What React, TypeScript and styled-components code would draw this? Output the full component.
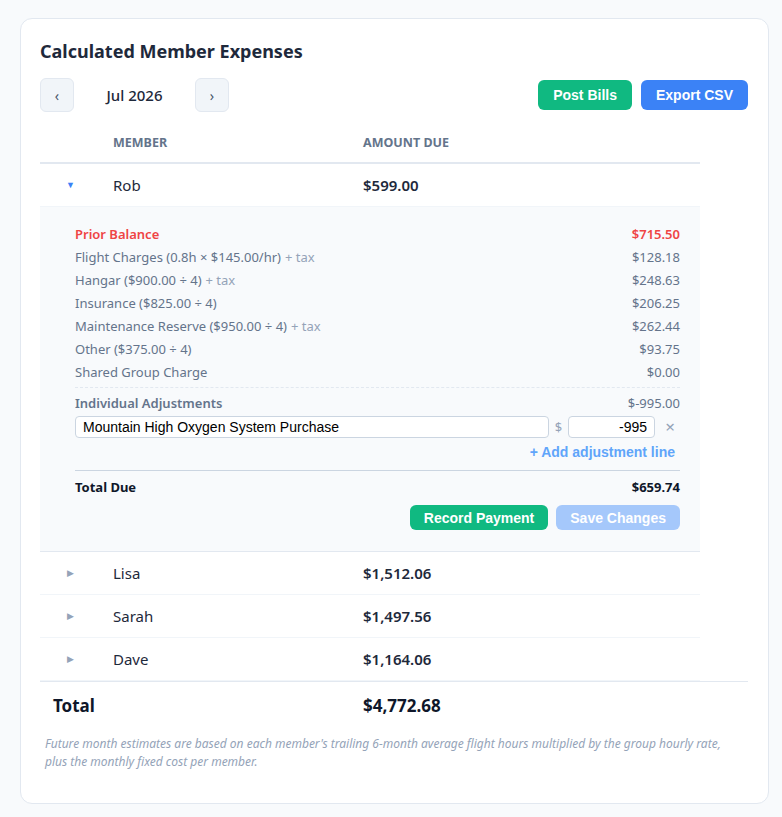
import React from 'react';
import styled, { createGlobalStyle } from 'styled-components';

const GlobalStyle = createGlobalStyle`
  html, body {
    margin: 0;
    padding: 0;
    background: #f8fafc;
    font-family: "Noto Sans", "Open Sans", sans-serif;
    color: #1e293b;
  }
`;

const Page = styled.div`
  padding: 18px 13px 14px 20px;
`;

const Card = styled.div`
  background: #ffffff;
  border: 1px solid #e2e8f0;
  border-radius: 12px;
  padding: 19px 20px 32px 19px;
`;

const Title = styled.h2`
  margin: 0;
  font-size: 18px;
  line-height: 26px;
  font-weight: 700;
  color: #1e293b;
`;

const Toolbar = styled.div`
  display: flex;
  align-items: center;
  justify-content: space-between;
  margin-top: 14px;
`;

const MonthNav = styled.div`
  display: flex;
  align-items: center;
`;

const NavButton = styled.button`
  width: 34px;
  height: 34px;
  border: 1px solid #e2e8f0;
  border-radius: 6px;
  background: #f1f5f9;
  color: #475569;
  font-family: "Noto Sans", sans-serif;
  font-size: 14px;
  padding: 0;
  display: flex;
  align-items: center;
  justify-content: center;
`;

const MonthLabel = styled.span`
  width: 121px;
  text-align: center;
  font-size: 15px;
  font-weight: 500;
  color: #1e293b;
`;

const Actions = styled.div`
  display: flex;
  gap: 9px;
`;

const ActionButton = styled.button<{ $bg: string }>`
  height: 30px;
  padding: 0 15px;
  border: none;
  border-radius: 6px;
  background: ${(p) => p.$bg};
  color: #ffffff;
  font-family: "Liberation Sans", Arial, sans-serif;
  font-weight: 700;
  font-size: 14px;
`;

const Table = styled.table`
  width: 660px;
  border-collapse: collapse;
  margin-top: 10px;
`;

const HeadCell = styled.th`
  text-align: left;
  padding: 11px 12px 9px;
  font-size: 12.5px;
  line-height: 20px;
  font-weight: 700;
  color: #64748b;
  text-transform: uppercase;
  border-bottom: 2px solid #e2e8f0;
`;

const Row = styled.tr`
  border-bottom: 1px solid #f1f5f9;
`;

const Cell = styled.td<{ $w?: number; $bold?: boolean }>`
  padding: 11px 12px;
  font-size: 15px;
  line-height: 20px;
  width: ${(p) => (p.$w ? `${p.$w}px` : 'auto')};
  font-weight: ${(p) => (p.$bold ? 600 : 400)};
  color: #1e293b;
`;

const Caret = styled.span<{ $open?: boolean }>`
  display: block;
  text-align: center;
  font-size: 9px;
  color: ${(p) => (p.$open ? '#3b82f6' : '#94a3b8')};
`;

const DetailRow = styled.tr`
  background: #f8fafc;
  border-bottom: 1px solid #e2e8f0;
`;

const DetailCell = styled.td`
  padding: 16px 20px 21px 35px;
`;

const Line = styled.div<{ $color?: string; $weight?: number }>`
  display: flex;
  justify-content: space-between;
  font-size: 13px;
  line-height: 23px;
  color: ${(p) => p.$color || '#64748b'};
  font-weight: ${(p) => p.$weight || 400};
`;

const Tax = styled.span`
  color: #94a3b8;
  margin-left: 4px;
`;

const DashedRule = styled.div`
  border-top: 1px dashed #e2e8f0;
  margin-top: 3px;
`;

const AdjustHead = styled.div`
  display: flex;
  justify-content: space-between;
  font-size: 13px;
  line-height: 20px;
  margin-top: 5px;
  color: #64748b;
`;

const AdjustLabel = styled.span`
  font-weight: 600;
`;

const AdjustRow = styled.div`
  display: flex;
  align-items: center;
  margin-top: 3px;
`;

const TextInput = styled.input<{ $w: number; $right?: boolean }>`
  box-sizing: border-box;
  width: ${(p) => p.$w}px;
  height: 22px;
  border: 1px solid #cbd5e1;
  border-radius: 4px;
  background: #ffffff;
  font-family: "Liberation Sans", Arial, sans-serif;
  font-size: 14px;
  color: #000000;
  padding: 0 7px;
  text-align: ${(p) => (p.$right ? 'right' : 'left')};
`;

const Dollar = styled.span`
  width: 19px;
  text-align: center;
  font-size: 13px;
  color: #94a3b8;
`;

const Remove = styled.span`
  flex: 1;
  text-align: right;
  padding-right: 5px;
  font-size: 17px;
  line-height: 20px;
  color: #94a3b8;
`;

const AddLink = styled.div`
  text-align: right;
  margin-top: 4px;
  padding-right: 5px;
  font-family: "Liberation Sans", Arial, sans-serif;
  font-weight: 700;
  font-size: 14px;
  line-height: 20px;
  color: #60a5fa;
`;

const SolidRule = styled.div`
  border-top: 1px solid #cbd5e1;
  margin-top: 8px;
`;

const TotalDue = styled.div`
  display: flex;
  justify-content: space-between;
  font-size: 13px;
  font-weight: 700;
  line-height: 20px;
  margin-top: 6px;
  color: #0f172a;
`;

const DetailActions = styled.div`
  display: flex;
  justify-content: flex-end;
  gap: 8px;
  margin-top: 8px;
`;

const SmallButton = styled.button<{ $bg: string }>`
  height: 25px;
  padding: 0 14px;
  border: none;
  border-radius: 6px;
  background: ${(p) => p.$bg};
  color: #ffffff;
  font-family: "Liberation Sans", Arial, sans-serif;
  font-weight: 700;
  font-size: 14px;
`;

const TotalRow = styled.div`
  display: flex;
  align-items: center;
  height: 46px;
  border-top: 1px solid #e2e8f0;
  font-size: 17px;
  font-weight: 700;
  color: #0f172a;
`;

const TotalLabel = styled.span`
  width: 310px;
  padding-left: 13px;
`;

const Note = styled.p`
  max-width: 692px;
  margin: 7px 0 0 5px;
  font-size: 12px;
  line-height: 18px;
  font-style: italic;
  color: #94a3b8;
`;

const breakdown = [
  { label: 'Flight Charges (0.8h × $145.00/hr)', tax: true, amount: '$128.18' },
  { label: 'Hangar ($900.00 ÷ 4)', tax: true, amount: '$248.63' },
  { label: 'Insurance ($825.00 ÷ 4)', tax: false, amount: '$206.25' },
  { label: 'Maintenance Reserve ($950.00 ÷ 4)', tax: true, amount: '$262.44' },
  { label: 'Other ($375.00 ÷ 4)', tax: false, amount: '$93.75' },
  { label: 'Shared Group Charge', tax: false, amount: '$0.00' },
];

const others = [
  { name: 'Lisa', amount: '$1,512.06' },
  { name: 'Sarah', amount: '$1,497.56' },
  { name: 'Dave', amount: '$1,164.06' },
];

export default function App() {
  return (
    <Page>
      <GlobalStyle />
      <Card>
        <Title>Calculated Member Expenses</Title>
        <Toolbar>
          <MonthNav>
            <NavButton>‹</NavButton>
            <MonthLabel>Jul 2026</MonthLabel>
            <NavButton>›</NavButton>
          </MonthNav>
          <Actions>
            <ActionButton $bg="#10b981">Post Bills</ActionButton>
            <ActionButton $bg="#3b82f6">Export CSV</ActionButton>
          </Actions>
        </Toolbar>

        <Table>
          <thead>
            <tr>
              <HeadCell style={{ width: 37 }} />
              <HeadCell style={{ width: 226 }}>Member</HeadCell>
              <HeadCell>Amount Due</HeadCell>
            </tr>
          </thead>
          <tbody>
            <Row>
              <Cell $w={37}>
                <Caret $open>▼</Caret>
              </Cell>
              <Cell $w={226}>Rob</Cell>
              <Cell $bold>$599.00</Cell>
            </Row>
            <DetailRow>
              <DetailCell colSpan={3}>
                <Line $color="#ef4444" $weight={600}>
                  <span>Prior Balance</span>
                  <span>$715.50</span>
                </Line>
                {breakdown.map((b) => (
                  <Line key={b.label}>
                    <span>
                      {b.label}
                      {b.tax && <Tax>+ tax</Tax>}
                    </span>
                    <span>{b.amount}</span>
                  </Line>
                ))}
                <DashedRule />
                <AdjustHead>
                  <AdjustLabel>Individual Adjustments</AdjustLabel>
                  <span>$-995.00</span>
                </AdjustHead>
                <AdjustRow>
                  <TextInput $w={474} defaultValue="Mountain High Oxygen System Purchase" />
                  <Dollar>$</Dollar>
                  <TextInput $w={87} $right defaultValue="-995" />
                  <Remove>×</Remove>
                </AdjustRow>
                <AddLink>+ Add adjustment line</AddLink>
                <SolidRule />
                <TotalDue>
                  <span>Total Due</span>
                  <span>$659.74</span>
                </TotalDue>
                <DetailActions>
                  <SmallButton $bg="#10b981">Record Payment</SmallButton>
                  <SmallButton $bg="#a5c8fb">Save Changes</SmallButton>
                </DetailActions>
              </DetailCell>
            </DetailRow>
            {others.map((m) => (
              <Row key={m.name}>
                <Cell $w={37}>
                  <Caret>▶</Caret>
                </Cell>
                <Cell $w={226}>{m.name}</Cell>
                <Cell $bold>{m.amount}</Cell>
              </Row>
            ))}
          </tbody>
        </Table>

        <TotalRow>
          <TotalLabel>Total</TotalLabel>
          <span>$4,772.68</span>
        </TotalRow>

        <Note>
          Future month estimates are based on each member's trailing 6-month average flight hours multiplied by the group
          hourly rate, plus the monthly fixed cost per member.
        </Note>
      </Card>
    </Page>
  );
}
